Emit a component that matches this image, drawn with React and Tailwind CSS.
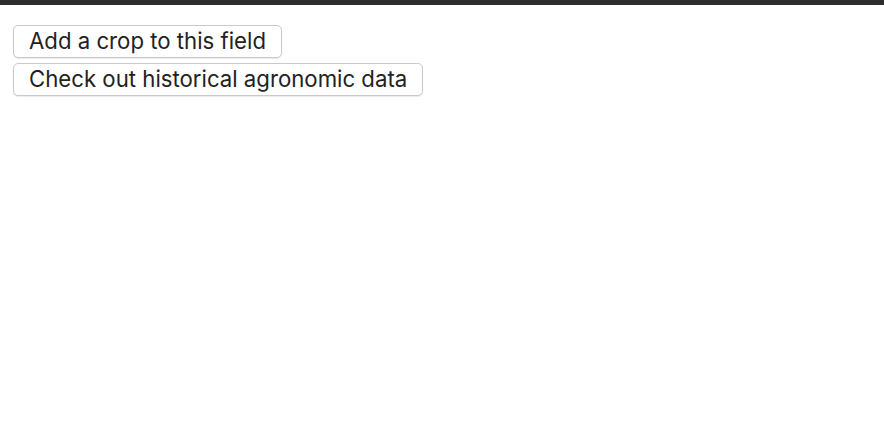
import React from "react";

const App = () => {
  return (
    <div className="min-h-screen bg-white" style={{ fontFamily: "Inter, 'Noto Sans', sans-serif" }}>
      <div className="h-[5px] bg-[#2e2e2e]" />
      <div className="flex flex-col items-start gap-[5px] pl-[13px] pt-[20px]">
        <button className="h-[33px] px-[15px] text-[22.2px] leading-none text-[#222] bg-white border border-[#c9c9c9] rounded-[5px] shadow-[0_1px_1px_rgba(0,0,0,0.08)]">
          Add a crop to this field
        </button>
        <button className="h-[33px] px-[15px] text-[22.2px] leading-none text-[#222] bg-white border border-[#c9c9c9] rounded-[5px] shadow-[0_1px_1px_rgba(0,0,0,0.08)]">
          Check out historical agronomic data
        </button>
      </div>
    </div>
  );
};

export default App;
